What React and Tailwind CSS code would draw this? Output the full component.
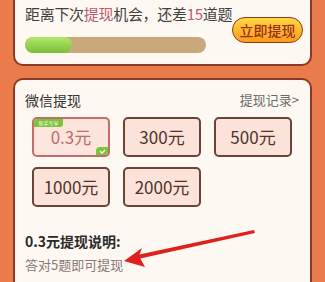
import React from 'react';

const amounts = ['0.3元', '300元', '500元', '1000元', '2000元'];

const App = () => {
    return (
        <div
            className="relative w-[325px] h-[282px] overflow-hidden bg-[#e97b4d] px-[13px] flex flex-col gap-[12px]"
            style={{ fontFamily: '"Noto Sans CJK SC", "Noto Sans", sans-serif' }}
        >
            {/* top progress card */}
            <div className="-mt-[10px] h-[76px] shrink-0 rounded-[10px] border-2 border-[#8a3a24] bg-[#fdf8f1] flex justify-between pl-[10px] pr-[7px] pt-[12px]">
                <div className="flex flex-col">
                    <div className="text-[15px] leading-[20px] text-[#3f3f3f] whitespace-nowrap tracking-[-0.3px]">
                        距离下次<span className="text-[#b85a70]">提现</span>机会，还差<span className="text-[#b85a70]">15</span>道题
                    </div>
                    <div className="mt-[13px] w-[181px] h-[16px] rounded-full bg-[#c9a97c] overflow-hidden">
                        <div className="w-[47px] h-full rounded-full bg-gradient-to-b from-[#b4e66a] to-[#79bf37]" />
                    </div>
                </div>
                <button className="mt-[13px] w-[77px] h-[26px] rounded-full border-[1.5px] border-[#8a3a18] bg-gradient-to-b from-[#ffd83f] to-[#ff9a1c] text-[14px] font-medium text-[#9a2d12] leading-none">
                    立即提现
                </button>
            </div>

            {/* withdraw card */}
            <div className="flex-1 rounded-t-[10px] border-2 border-b-0 border-[#8a3a24] bg-[#fdf8f1] pt-[10px] pl-[10px] pr-[11px]">
                <div className="flex justify-between items-center h-[20px]">
                    <span className="text-[14px] text-[#333]">微信提现</span>
                    <span className="text-[13px] text-[#6a6a6a]">提现记录&gt;</span>
                </div>
                <div className="mt-[7px] ml-[7px] grid grid-cols-[78px_78px_78px] gap-x-[13px] gap-y-[10px]">
                    {amounts.map((a, i) => (
                        <div
                            key={a}
                            className={
                                i === 0
                                    ? 'relative h-[40px] rounded-[5px] border-2 border-[#c46d6d] bg-[#fbe5dc] flex items-center justify-center text-[17px] text-[#c06a6a] overflow-hidden'
                                    : 'relative h-[40px] rounded-[5px] border-2 border-[#6b4338] bg-[#fbe3d9] flex items-center justify-center text-[17px] text-[#503229] overflow-hidden'
                            }
                        >
                            {i === 0 && (
                                <>
                                    <span className="absolute left-0 top-0 w-[29px] h-[8px] bg-[#7cc43a] rounded-br-[3px] text-[5px] leading-[8px] text-white text-center">新手专享</span>
                                    <span className="absolute right-0 bottom-0 w-[12px] h-[8px] bg-[#7cc43a] rounded-tl-[4px] flex items-center justify-center">
                                        <svg width="7" height="5" viewBox="0 0 7 5">
                                            <path d="M1 2.3 L3 4 L6 1" fill="none" stroke="#fff" strokeWidth="1.3" />
                                        </svg>
                                    </span>
                                </>
                            )}
                            {a}
                        </div>
                    ))}
                </div>
                <div className="mt-[24px] text-[14px] leading-[20px] font-bold text-[#2a2a2a]">0.3元提现说明:</div>
                <div className="mt-[4px] text-[13px] leading-[20px] text-[#8c7878]">答对5题即可提现</div>
            </div>

            {/* red arrow annotation */}
            <svg className="absolute left-0 top-0 pointer-events-none" width="325" height="282" viewBox="0 0 325 282">
                <polygon points="254,230 255,233 138,259 137,255" fill="#e0201c" />
                <polygon points="124,261 142,248 139,256 145,267" fill="#e0201c" />
            </svg>
        </div>
    );
};

export default App;
